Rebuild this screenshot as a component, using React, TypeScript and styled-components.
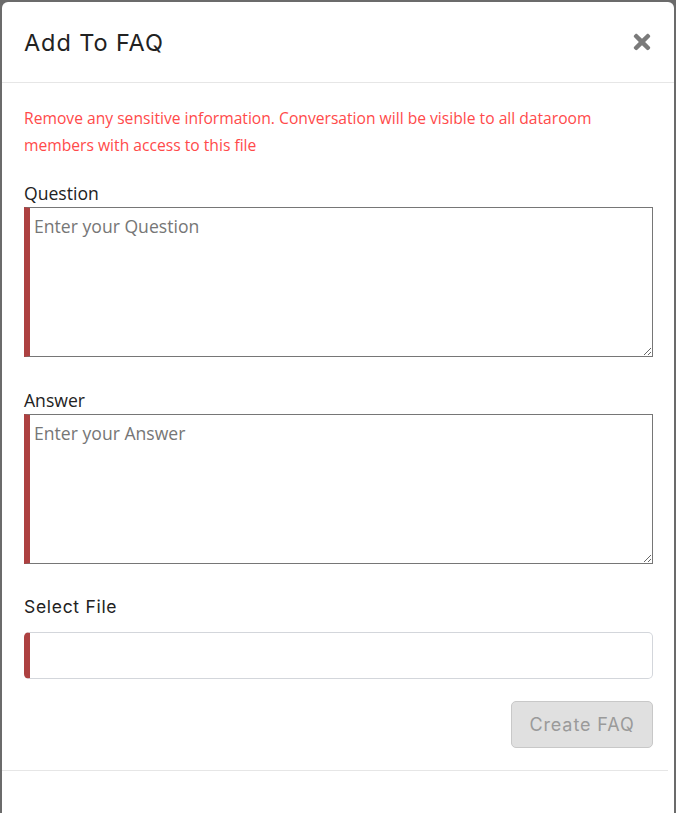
import styled, { createGlobalStyle } from "styled-components";
import { FaTimes } from "react-icons/fa";

const GlobalStyle = createGlobalStyle`
  html, body {
    margin: 0;
    padding: 0;
    background: #6b6b6b;
    height: 100%;
    overflow: hidden;
  }
  #root {
    padding: 2px 2px 0 2px;
  }
`;

const Modal = styled.div`
  width: 672px;
  height: 830px;
  background: #ffffff;
  border-radius: 6px 6px 0 0;
  display: flex;
  flex-direction: column;
  font-family: "Open Sans", "Noto Sans", sans-serif;
`;

const Header = styled.div`
  height: 80px;
  display: flex;
  align-items: center;
  justify-content: space-between;
  padding: 0 20px 0 22px;
  border-bottom: 1px solid #e6e6e6;
`;

const Title = styled.h4`
  margin: 0;
  font-family: "Inter", "Lato", sans-serif;
  font-weight: 400;
  font-size: 23.5px;
  color: #222222;
  letter-spacing: 0.9px;
`;

const CloseButton = styled.button`
  border: none;
  background: transparent;
  padding: 0;
  display: flex;
  color: #7a7a7a;
  cursor: pointer;
`;

const Body = styled.div`
  padding: 22px 21px 0 22px;
  display: flex;
  flex-direction: column;
`;

const Warning = styled.p`
  margin: 0 0 22px;
  font-size: 15.65px;
  line-height: 27px;
  color: #ff4a4a;
`;

const Label = styled.label<{ $poppins?: boolean }>`
  display: block;
  font-family: ${(p) => (p.$poppins ? '"Inter", "Lato", sans-serif' : '"Open Sans", sans-serif')};
  font-size: ${(p) => (p.$poppins ? "17.5px" : "17.6px")};
  letter-spacing: ${(p) => (p.$poppins ? "0.7px" : "0")};
  line-height: 24px;
  color: #222222;
  margin-bottom: ${(p) => (p.$poppins ? "13px" : "2px")};
`;

const Field = styled.div`
  margin-bottom: 31px;
`;

const TextArea = styled.textarea`
  display: block;
  box-sizing: border-box;
  width: 100%;
  height: 150px;
  border: 1px solid #767676;
  border-left: 6px solid #ad4141;
  padding: 6px 4px;
  font-family: "Open Sans", sans-serif;
  font-size: 17.6px;
  color: #333;
  outline: none;
  resize: vertical;
  &::placeholder {
    color: #767676;
  }
`;

const FileSelect = styled.div`
  box-sizing: border-box;
  height: 47px;
  border: 1px solid #d3d6db;
  border-left: 6px solid #ad4141;
  border-radius: 5px;
`;

const Actions = styled.div`
  display: flex;
  justify-content: flex-end;
  padding: 22px 0 22px;
`;

const SubmitButton = styled.button`
  box-sizing: border-box;
  width: 142px;
  height: 47px;
  background: #e0e0e0;
  border: 1px solid #c8c8c8;
  border-radius: 5px;
  font-family: "Inter", "Lato", sans-serif;
  font-size: 18px;
  letter-spacing: 0.9px;
  color: #9a9a9a;
`;

const Footer = styled.div`
  border-top: 1px solid #e6e6e6;
  margin-right: 6px;
  height: 60px;
`;

export default function App() {
  return (
    <>
      <GlobalStyle />
      <Modal>
        <Header>
          <Title>Add To FAQ</Title>
          <CloseButton aria-label="Close">
            <FaTimes size={24} />
          </CloseButton>
        </Header>
        <Body>
          <Warning>
            Remove any sensitive information. Conversation will be visible to all dataroom
            members with access to this file
          </Warning>
          <Field>
            <Label>Question</Label>
            <TextArea placeholder="Enter your Question" />
          </Field>
          <Field>
            <Label>Answer</Label>
            <TextArea placeholder="Enter your Answer" />
          </Field>
          <div>
            <Label $poppins>Select File</Label>
            <FileSelect />
          </div>
          <Actions>
            <SubmitButton disabled>Create FAQ</SubmitButton>
          </Actions>
        </Body>
        <Footer />
      </Modal>
    </>
  );
}
